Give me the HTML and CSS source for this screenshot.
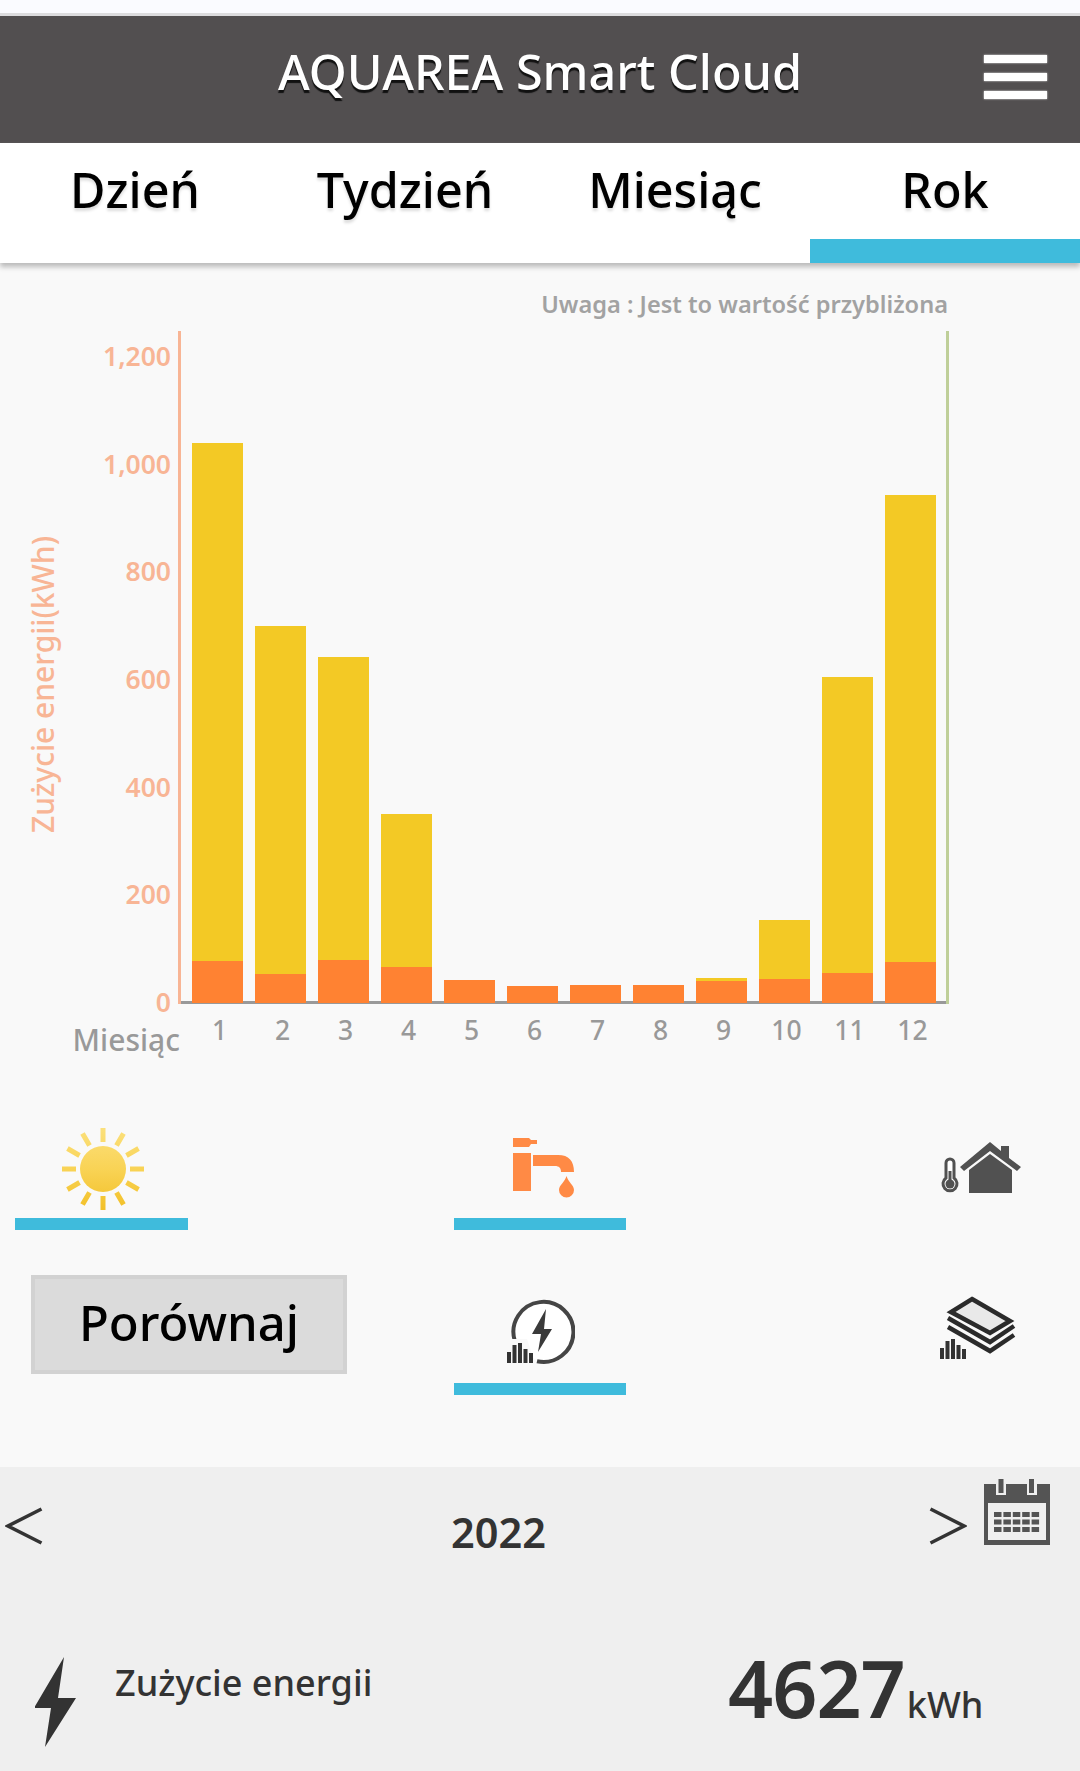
FILE: index.html
```html
<!DOCTYPE html>
<html lang="pl">
<head>
    <meta charset="UTF-8">
    <meta name="viewport" content="width=device-width, initial-scale=1.0">
    <title>AQUAREA Smart Cloud</title>
    <link rel="stylesheet" href="styles.css">
</head>
<body>
    <header class="header">
        <h1>AQUAREA Smart Cloud</h1>
        <button class="menu"><span></span><span></span><span></span></button>
    </header>

    <nav class="tabs">
        <a class="tab">Dzień</a>
        <a class="tab">Tydzień</a>
        <a class="tab">Miesiąc</a>
        <a class="tab active">Rok</a>
    </nav>

    <section class="chart">
        <p class="note">Uwaga : Jest to wartość przybliżona</p>
        <div class="plot">
            <div class="y-title"><span>Zużycie energii(kWh)</span></div>
            <div class="y-labels">
                <span>1,200</span>
                <span>1,000</span>
                <span>800</span>
                <span>600</span>
                <span>400</span>
                <span>200</span>
                <span>0</span>
            </div>
            <div class="bars" id="bars"></div>
        </div>
        <div class="x-axis">
            <span class="x-title">Miesiąc</span>
            <div class="x-labels" id="months"></div>
        </div>
    </section>

    <section class="controls">
        <div class="cell on sun">
            <svg width="84" height="84" viewBox="-42 -42 84 84">
                <defs>
                    <linearGradient id="sunFill" gradientUnits="userSpaceOnUse" x1="0" y1="-41" x2="0" y2="41">
                        <stop offset="0" stop-color="#fbe07c"/>
                        <stop offset="0.5" stop-color="#f9d355"/>
                        <stop offset="1" stop-color="#f2c028"/>
                    </linearGradient>
                </defs>
                <circle r="23" fill="url(#sunFill)"/>
                <path d="M-2.500 -41h5v14h-5zM-2.500 27h5v14h-5zM-41 -2.500h14v5h-14zM27 -2.500h14v5h-14z
                    M18.300 -36.800l4.400 2.500 -7 12.100 -4.400 -2.500zM-18.300 -36.800l-4.400 2.500 7 12.100 4.400 -2.500z
                    M18.300 36.800l4.400 -2.500 -7 -12.100 -4.400 2.500zM-18.300 36.800l-4.400 -2.500 7 -12.100 4.400 2.500z
                    M34.300 -22.700l2.500 4.400 -12.100 7 -2.500 -4.400zM-34.300 -22.700l-2.500 4.400 12.100 7 2.500 -4.400z
                    M34.300 22.700l2.500 -4.400 -12.100 -7 -2.500 4.400zM-34.300 22.700l-2.500 -4.400 12.100 -7 2.500 4.400z" fill="url(#sunFill)"/>
            </svg>
        </div>
        <div class="cell on tap">
            <svg width="64" height="64" viewBox="0 0 64 64" fill="#ff8a45">
                <path d="M1 2H17L19 4H25V8H19L17 11H1z"/>
                <path d="M1 17H19V55H1z"/>
                <path d="M21 19H46C57 19 62 25 62 36H49C49 32 47 30 43 30H21z"/>
                <path d="M54.500 40C56 46 62 49 62 54A7.500 7.500 0 0 1 47 54C47 49 53 46 54.500 40z"/>
            </svg>
        </div>
        <div class="cell home">
            <svg width="84" height="60" viewBox="0 0 84 60">
                <path d="M50 2L61 11V6H69V18L81 27L77 31L50 11L24 31L20 27z" fill="#515151"/>
                <path d="M50 14L72 30V53H29V30z" fill="#515151"/>
                <path d="M6 23a4 4 0 0 1 8 0V38a7 7 0 1 1 -8 0z" fill="#fff" stroke="#515151" stroke-width="3"/>
                <path d="M10 31V44" stroke="#515151" stroke-width="3"/>
                <circle cx="10" cy="44" r="4.500" fill="#515151"/>
            </svg>
        </div>
        <div class="cell compare">
            <button>Porównaj</button>
        </div>
        <div class="cell on energy">
            <svg width="68" height="66" viewBox="0 0 68 66">
                <path d="M5.700 42A30 30 0 1 1 28 62.700" transform="translate(2 -0.500)" fill="#fff" stroke="#454545" stroke-width="4"/>
                <path d="M39 10L25 35H34L31 53L45 30H37z" fill="#3a3a3a"/>
                <path d="M0 40L20 40L28 64H0z" fill="#f9f9f9"/>
                <path d="M0 53h4V64h-4zM5.500 46h4V64h-4zM11 44h4V64h-4zM16.500 50h4V64h-4zM22 54h4V64h-4z" fill="#333"/>
            </svg>
        </div>
        <div class="cell layers">
            <svg width="78" height="68" viewBox="0 0 78 68" fill="none" stroke="#2b2b2b" stroke-width="4.500">
                <path d="M32 4L70 26L50 38L11 17z" fill="#e9e9e9"/>
                <path d="M8 23L50 47L74 31M8 32L50 56L74 40"/>
                <path d="M0 53h4V64h-4zM5.500 46h4V64h-4zM11 44h4V64h-4zM16.500 50h4V64h-4zM22 54h4V64h-4z" fill="#333" stroke="none"/>
            </svg>
        </div>
    </section>

    <footer class="summary">
        <div class="period">
            <svg class="arrow" width="38" height="40" viewBox="0 0 38 40"><path d="M36.500 3L3 20L36.500 37"/></svg>
            <span class="year">2022</span>
            <svg class="arrow" width="38" height="40" viewBox="0 0 38 40"><path d="M1.500 3L35 20L1.500 37"/></svg>
            <svg class="calendar" width="66" height="66" viewBox="0 0 66 66">
                <path d="M0 5H66V66H0z" fill="#545454"/>
                <path d="M4 24H62V61H4zM12 3H22V16H12zM43 3H53V16H43z" fill="#efefef"/>
                <path d="M14.500 0h5V14h-5zM45 0h5V14h-5z" fill="#545454"/>
                <path d="M10 35.500H56M10 43H56M10 50.500H56" stroke="#545454" stroke-width="5" stroke-dasharray="7.500 1.900"/>
            </svg>
        </div>
        <div class="total">
            <svg class="bolt" width="42" height="90" viewBox="0 0 42 90"><path d="M29 0L-1 51H16L10 90L41 41H23z" fill="#333"/></svg>
            <span class="label">Zużycie energii</span>
            <span class="value">4627</span><span class="unit">kWh</span>
        </div>
    </footer>

    <script>
    // [heating, hot water] bar heights in px
    const data = [
        [518, 42], [348, 29], [303, 43], [153, 36], [0, 23], [0, 17],
        [0, 18], [0, 18], [3, 22], [59, 24], [296, 30], [467, 41]
    ]

    for (let i = 0; i < data.length; i++) {
        bars.innerHTML += `<div class="bar"><i class="heat" style="height:${data[i][0]}px"></i><i class="water" style="height:${data[i][1]}px"></i></div>`
        months.innerHTML += `<span>${i + 1}</span>`
    }
    </script>
</body>
</html>
```
FILE: styles.css
```css
* {
    box-sizing: border-box;
}
body {
    margin: 0;
    height: 1771px;
    padding-top: 13px;
    background-color: #f9f9f9;
    background-image: linear-gradient(#fafbff, #fafbff);
    background-size: 100% 13px;
    background-repeat: no-repeat;
    font-family: "Noto Sans", "Open Sans", sans-serif;
    font-weight: 500;
    color: #333;
    overflow: hidden;
}
button {
    font: inherit;
    padding: 0;
    border: 0;
    background: none;
}

.header {
    display: grid;
    grid-template-columns: 130px 1fr 130px;
    height: 130px;
    border-top: 3px solid #dcdcde;
    background-color: #524f50;
}
.header h1 {
    grid-column: 2;
    margin: 0;
    text-align: center;
    font-size: 48.500px;
    font-weight: 500;
    line-height: 110px;
    color: #fff;
    text-shadow: 0 3px 1px #111;
}
.menu {
    display: flex;
    flex-direction: column;
    gap: 10px;
    padding: 39px 33px 0 34px;
}
.menu span {
    width: 63px;
    height: 8px;
    background-color: #fff;
    box-shadow: 0 0 2px #fff;
}

.tabs {
    display: grid;
    grid-template-columns: repeat(4, 1fr);
    height: 120px;
    background-color: #fff;
    box-shadow: 0 4px 5px #bbb;
}
.tab {
    text-align: center;
    font-size: 48.500px;
    line-height: 93px;
    color: #000;
    text-shadow: 0 3px 3px #ddd;
}
.tab.active {
    border-bottom: 24px solid #3fbbdc;
}

.chart {
    height: 847px;
}
.note {
    margin: 0;
    height: 68px;
    padding-right: 132px;
    text-align: right;
    font-size: 23.600px;
    font-weight: 600;
    line-height: 82px;
    color: #a2a2a2;
}
.plot {
    display: flex;
    height: 673px;
    color: #f8b595;
}
.y-title {
    display: flex;
    justify-content: center;
    width: 84px;
    padding-top: 34px;
}
.y-title span {
    writing-mode: vertical-rl;
    transform: rotate(180deg);
    text-align: center;
    font-size: 30px;
}
.y-labels {
    display: flex;
    flex-direction: column;
    gap: 67.670px;
    width: 94px;
    padding: 5px 7px 0 0;
    text-align: right;
    font-size: 26.500px;
    font-weight: 600;
}
.y-labels span {
    line-height: 40px;
}
.bars {
    display: flex;
    align-items: flex-end;
    gap: 12px;
    width: 771px;
    padding: 0 0 1px 11px;
    border-left: 3px solid #f8b595;
    border-right: 3px solid #bfcf99;
    background: linear-gradient(#999, #999) bottom / 100% 3px no-repeat;
}
.bar {
    width: 51px;
}
.bar i {
    display: block;
}
.heat {
    background-color: #f3c925;
}
.water {
    background-color: #ff8232;
}
.x-axis {
    display: flex;
    color: #999;
}
.x-title {
    width: 180px;
    text-align: right;
    font-size: 30px;
    line-height: 71px;
}
.x-labels {
    display: flex;
    padding-left: 8px;
    font-size: 26.500px;
    line-height: 53px;
}
.x-labels span {
    width: 63px;
    text-align: center;
}

.controls {
    display: grid;
    grid-template-columns: 454px 172px 1fr;
    grid-template-rows: 120px 165px;
    height: 357px;
}
.cell {
    display: flex;
    justify-content: center;
    align-items: flex-start;
}
.on {
    border-bottom: 12px solid #3fbbdc;
}
.sun {
    width: 173px;
    margin-left: 15px;
    padding: 17px 0 0 2px;
}
.tap {
    padding: 26px 0 0 7px;
}
.home {
    justify-content: flex-start;
    padding: 30px 0 0 314px;
}
.compare {
    justify-content: flex-start;
    padding: 45px 0 0 31px;
}
.compare button {
    width: 316px;
    height: 99px;
    padding-bottom: 5px;
    border: 4px solid #d2d2d2;
    background-color: #dbdbdb;
    font-size: 49px;
    line-height: 80px;
    color: #000;
}
.energy {
    padding: 69px 0 0 1px;
}
.layers {
    justify-content: flex-start;
    padding: 65px 0 0 314px;
}

.summary {
    height: 304px;
    background-color: #efefef;
}
.period {
    display: flex;
    height: 160px;
    padding-left: 5px;
}
.arrow {
    margin-top: 39px;
    fill: none;
    stroke: #333;
    stroke-width: 3.500;
}
.year {
    width: 886px;
    padding-left: 25px;
    text-align: center;
    font-size: 41.500px;
    font-weight: 600;
    line-height: 130px;
}
.calendar {
    margin: 12px 0 0 17px;
}
.total {
    display: flex;
}
.bolt {
    margin: 30px 0 0 35px;
}
.label {
    width: 651px;
    padding-left: 38px;
    font-size: 36px;
    line-height: 112px;
}
.value {
    letter-spacing: -1px;
    font-size: 79px;
    font-weight: 600;
    line-height: 121px;
}
.unit {
    margin-left: 2px;
    font-size: 36px;
    line-height: 155px;
}
```
